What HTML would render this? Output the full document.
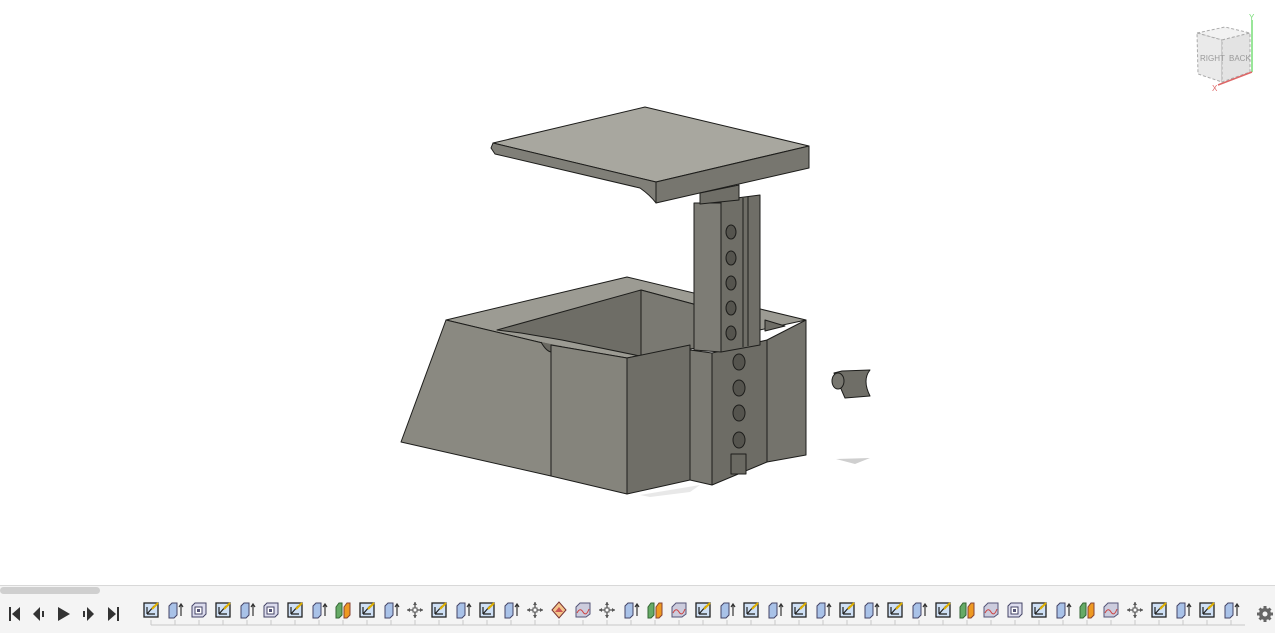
<!DOCTYPE html>
<html><head><meta charset="utf-8"><style>
html,body{margin:0;padding:0;width:1275px;height:632px;overflow:hidden;background:#fff;font-family:"Liberation Sans",sans-serif}
#tl{position:absolute;left:0;top:585px;width:1275px;height:47px;background:#f4f4f4;border-top:1px solid #d8d8d8}
#sb{position:absolute;left:0;top:587px;width:100px;height:7px;background:#cfcfcf;border-radius:4px}
</style></head><body>
<svg width="1275" height="585" style="position:absolute;left:0;top:0">
<g stroke="#1d1d1b" stroke-width="1" stroke-linejoin="round">
<polygon points="640,495 700,485 690,492 650,497" fill="#e8e8e8" stroke="none"/>
<polygon points="836,459 870,458 855,464" fill="#cfcfcf" stroke="none"/>
<polygon points="446,320 627,277 806,320 690,345 627,358 551,345" fill="#9c9b93"/>
<polygon points="497,330 641,290 697,305 697,348 640,356 562,340 521,333" fill="#6e6d66"/>
<polygon points="641,290 697,305 697,348 641,356" fill="#7a7972"/>
<polygon points="765,320 785,326 765,331" fill="#6e6d66"/>
<polygon points="446,320 551,345 551,476 401,442" fill="#8a8981"/>
<path d="M541,342 Q551,360 561,346" fill="#6a6962"/>
<polygon points="551,345 627,358 627,494 551,476" fill="#85847c"/>
<polygon points="627,358 690,345 690,480 627,494" fill="#6f6e67"/>
<polygon points="767,340 806,320 806,455 767,462" fill="#74736c"/>
<polygon points="690,350 712,353 712,485 690,480" fill="#7a7972"/>
<polygon points="712,353 767,340 767,462 712,485" fill="#6d6c65"/>
<polygon points="694,203 721,203 721,352 694,350" fill="#7d7c75"/>
<polygon points="721,200 760,195 760,345 721,352" fill="#6f6e67"/>
<line x1="743" y1="198" x2="743" y2="347"/>
<line x1="748" y1="197" x2="748" y2="346"/>
<polygon points="493,143 645,107 809,146 656,182" fill="#a8a79f"/>
<polygon points="656,182 809,146 809,168 656,203" fill="#77766f"/>
<path d="M493,143 L656,182 L656,203 Q650,195 640,188 L495,154 L491,148 Z" fill="#807f78"/>
<polygon points="700,193 739,185 739,200 700,204" fill="#6f6e67"/>
<g fill="#55544e">
<ellipse cx="731" cy="232" rx="5" ry="7"/><ellipse cx="731" cy="258" rx="5" ry="7"/><ellipse cx="731" cy="283" rx="5" ry="7"/><ellipse cx="731" cy="308" rx="5" ry="7"/><ellipse cx="731" cy="333" rx="5" ry="7"/>
<ellipse cx="739" cy="362" rx="6" ry="8"/><ellipse cx="739" cy="388" rx="6" ry="8"/><ellipse cx="739" cy="413" rx="6" ry="8"/><ellipse cx="739" cy="440" rx="6" ry="8"/>
</g>
<rect x="731" y="454" width="15" height="20" fill="#6a6962"/>
<path d="M834,373 L842,371 L870,370 Q862,380 870,396 L845,398 Z" fill="#6f6e67"/>
<ellipse cx="838" cy="381" rx="6" ry="8" fill="#77766f"/>
</g>
<g font-size="8" fill="#999" font-family="Liberation Sans">
<polygon points="1197,33 1225,27 1250,33 1222,40" fill="#f2f2f2" stroke="#aaa" stroke-dasharray="3,2"/>
<polygon points="1197,33 1222,40 1222,82 1198,74" fill="#eaeaea" stroke="#aaa" stroke-dasharray="3,2"/>
<polygon points="1222,40 1250,33 1250,72 1222,82" fill="#e3e3e3" stroke="#aaa" stroke-dasharray="3,2"/>
<text x="1200" y="61">RIGHT</text><text x="1229" y="61">BACK</text>
<line x1="1252" y1="72" x2="1252" y2="20" stroke="#7d7" stroke-width="1.5"/>
<line x1="1252" y1="72" x2="1218" y2="85" stroke="#d66" stroke-width="1.5"/>
<text x="1212" y="91" fill="#d66">X</text><text x="1249" y="20" fill="#7d7">Y</text>
</g>
</svg>
<div id="tl"></div><div id="sb"></div>
<svg width="1275" height="47" style="position:absolute;left:0;top:585px">
<g fill="#333">
<rect x="9" y="22" width="2" height="14"/><polygon points="20,22 20,36 12,29"/>
<polygon points="40,22 40,36 33,29"/><rect x="42" y="26" width="2" height="6"/>
<polygon points="58,22 58,36 70,29"/>
<rect x="83" y="26" width="2" height="6"/><polygon points="87,22 87,36 94,29"/>
<polygon points="108,22 108,36 116,29"/><rect x="117" y="22" width="2" height="14"/>
</g>
<line x1="151" y1="40" x2="1245" y2="40" stroke="#c8c8c8"/>
<g id="ticks" stroke="#c8c8c8"></g>
<g id="icons"></g>
<g transform="translate(1265,29)" fill="#666"><g stroke="#666" stroke-width="3"><line x1="0" y1="-8" x2="0" y2="8"/><line x1="-8" y1="0" x2="8" y2="0"/><line x1="-5.5" y1="-5.5" x2="5.5" y2="5.5"/><line x1="-5.5" y1="5.5" x2="5.5" y2="-5.5"/></g><circle r="6"/><circle r="2.5" fill="#f4f4f4"/></g>
</svg>
<script>
var seq="SEBSEBSECSEMSESEMPWMECWSESESESESESCWBSECWMSESE";
var ic={
S:'<rect x="-7" y="-7" width="14" height="14" fill="#cfe0f5" stroke="#222" stroke-width="1.3"/><path d="M-4,4 L-4,-3 M-4,4 L4,4 M-4,4 L3,-4" stroke="#222" stroke-width="1.2" fill="none"/><line x1="1" y1="-1" x2="7" y2="-7" stroke="#e0b000" stroke-width="2"/>',
E:'<path d="M-6,-4 L-3,-7 L2,-7 L2,5 L-1,8 L-6,8 Z" fill="#a9c2e8" stroke="#446" stroke-width="1"/><path d="M6,6 L6,-5 M4,-3 L6,-6 L8,-3" stroke="#333" fill="none" stroke-width="1.2"/>',
B:'<path d="M-7,-4 L-4,-7 L7,-7 L7,4 L4,7 L-7,7 Z" fill="#dde" stroke="#446"/><rect x="-4" y="-3" width="7" height="7" fill="#fff" stroke="#446"/><rect x="-2" y="-1" width="3" height="3" fill="#557"/>',
C:'<path d="M-7,-3 L-4,-7 L-1,-7 L-1,5 L-4,8 L-7,8 Z" fill="#6a6" stroke="#363"/><path d="M1,-3 L4,-7 L7,-7 L7,5 L4,8 L1,8 Z" fill="#e92" stroke="#843"/>',
M:'<path d="M0,-8 L0,8 M-8,0 L8,0" stroke="#555" stroke-width="1.3"/><path d="M0,-8 L-2,-5 L2,-5 Z M0,8 L-2,5 L2,5 Z M-8,0 L-5,-2 L-5,2 Z M8,0 L5,-2 L5,2 Z" fill="#555"/><rect x="-2" y="-2" width="4" height="4" fill="#fff" stroke="#555"/>',
P:'<path d="M-7,0 L0,-8 L7,0 L0,8 Z" fill="#f4c48a" stroke="#733"/><path d="M-4,2 L0,-3 L4,2 Z" fill="#c55"/>',
W:'<path d="M-7,-3 L-3,-7 L7,-7 L7,4 L3,7 L-7,7 Z" fill="#ccd" stroke="#557"/><path d="M-6,3 Q-3,-3 0,2 T6,-1" stroke="#c44" fill="none"/>'
};
var h='',t='';
for(var i=0;i<seq.length;i++){var x=151+24*i;h+='<g transform="translate('+x+',25)">'+ic[seq[i]]+'</g>';t+='<line x1="'+x+'" y1="35" x2="'+x+'" y2="40"/>';}
document.getElementById('icons').innerHTML=h;document.getElementById('ticks').innerHTML=t;
</script>
</body></html>
